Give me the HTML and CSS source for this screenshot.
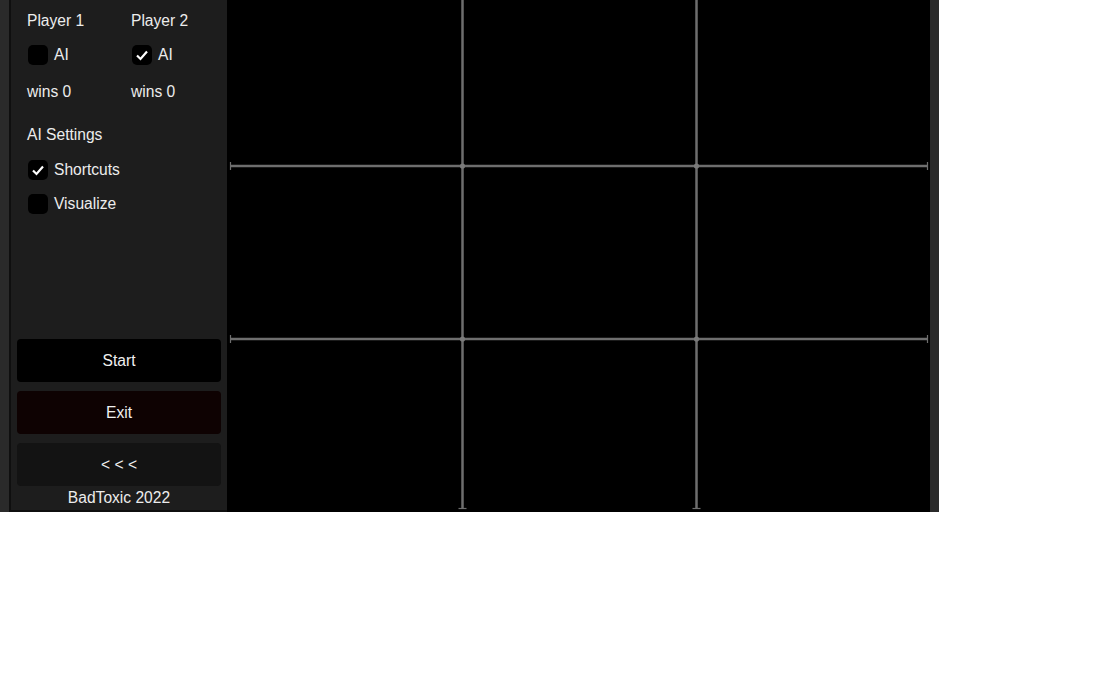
FILE: index.html
```html
<!DOCTYPE html>
<html>
<head>
<meta charset="utf-8">
<link rel="stylesheet" href="styles.css">
</head>
<body>
<div class="app">
  <aside class="sidebar">
    <div class="players">
      <div class="player">
        <div class="label">Player 1</div>
        <label class="check"><span class="box"></span><span>AI</span></label>
        <div class="wins">wins 0</div>
      </div>
      <div class="player">
        <div class="label">Player 2</div>
        <label class="check"><span class="box on"><svg viewBox="0 0 20 20" width="20" height="20"><path d="M5 10.5 L8.5 14 L15 6.5" fill="none" stroke="#fff" stroke-width="2.2"/></svg></span><span>AI</span></label>
        <div class="wins">wins 0</div>
      </div>
    </div>
    <div class="settings">
      <div class="label">AI Settings</div>
      <label class="check"><span class="box on"><svg viewBox="0 0 20 20" width="20" height="20"><path d="M5 10.5 L8.5 14 L15 6.5" fill="none" stroke="#fff" stroke-width="2.2"/></svg></span><span>Shortcuts</span></label>
      <label class="check"><span class="box"></span><span>Visualize</span></label>
    </div>
    <div class="buttons">
      <button class="btn start">Start</button>
      <button class="btn exit">Exit</button>
      <button class="btn back">&lt; &lt; &lt;</button>
    </div>
    <div class="credit">BadToxic 2022</div>
  </aside>
  <main class="game">
    <svg class="board" viewBox="0 0 703 512" width="703" height="512">
      <g stroke="#6e6e6e" stroke-width="2.5" fill="none">
        <line x1="3" y1="166" x2="701" y2="166"/>
        <line x1="3" y1="339" x2="701" y2="339"/>
        <line x1="235.5" y1="0" x2="235.5" y2="509"/>
        <line x1="469.5" y1="0" x2="469.5" y2="509"/>
      </g>
      <g stroke="#6e6e6e" stroke-width="1.2">
        <line x1="3.5" y1="162" x2="3.5" y2="170"/>
        <line x1="3.5" y1="335" x2="3.5" y2="343"/>
        <line x1="700.5" y1="162" x2="700.5" y2="170"/>
        <line x1="700.5" y1="335" x2="700.5" y2="343"/>
        <line x1="231.5" y1="508.5" x2="239.5" y2="508.5"/>
        <line x1="465.5" y1="508.5" x2="473.5" y2="508.5"/>
      </g>
      <g fill="#7a7a7a">
        <circle cx="235.5" cy="166" r="2.6"/>
        <circle cx="469.5" cy="166" r="2.6"/>
        <circle cx="235.5" cy="339" r="2.6"/>
        <circle cx="469.5" cy="339" r="2.6"/>
      </g>
    </svg>
  </main>
</div>
</body>
</html>
```

FILE: styles.css
```css
* { box-sizing: border-box; }
html, body { margin: 0; padding: 0; background: #fff; }
body { font-family: "Liberation Sans", Arial, sans-serif; }

.app {
  width: 939px;
  height: 512px;
  display: flex;
  background: #2a2a2a;
  padding: 0 9px 0 9px;
  overflow: hidden;
}

.sidebar {
  width: 218px;
  height: 512px;
  flex-shrink: 0;
  background: #1d1d1d;
  border-left: 2px solid #0f0f0f;
  border-bottom: 2px solid #0f0f0f;
  display: flex;
  flex-direction: column;
  color: #ececec;
  font-size: 15.6px;
  padding: 0 6px 0 6px;
}

.players {
  display: flex;
  padding-left: 10px;
}

.player {
  width: 104px;
  flex-shrink: 0;
  display: flex;
  flex-direction: column;
}

.label {
  height: 17px;
  line-height: 17px;
  margin-top: 12px;
}

.check {
  display: flex;
  align-items: center;
  gap: 6px;
  height: 20px;
  margin-top: 16px;
  padding-left: 1px;
}

.box {
  width: 20px;
  height: 20px;
  border-radius: 5px;
  background: #000;
  display: block;
  flex-shrink: 0;
}
.box svg { display: block; }

.wins {
  height: 17px;
  line-height: 17px;
  margin-top: 18px;
}

.settings {
  display: flex;
  flex-direction: column;
  padding-left: 10px;
}
.settings .label { margin-top: 26px; }
.settings .check { margin-top: 17px; }
.settings .check + .check { margin-top: 14px; }

.buttons {
  margin-top: auto;
  display: flex;
  flex-direction: column;
  gap: 9px;
}

.btn {
  height: 43px;
  border: none;
  border-radius: 4px;
  color: #f0f0f0;
  font-family: "Liberation Sans", Arial, sans-serif;
  font-size: 15.6px;
  padding: 0;
}
.start { background: #000; }
.exit { background: #0e0202; }
.back { background: #131313; }

.credit {
  text-align: center;
  height: 22px;
  line-height: 22px;
  margin-top: 1px;
  margin-bottom: 1px;
}

.game {
  width: 703px;
  height: 512px;
  flex-shrink: 0;
  background: #000;
}
.board { display: block; }
```
